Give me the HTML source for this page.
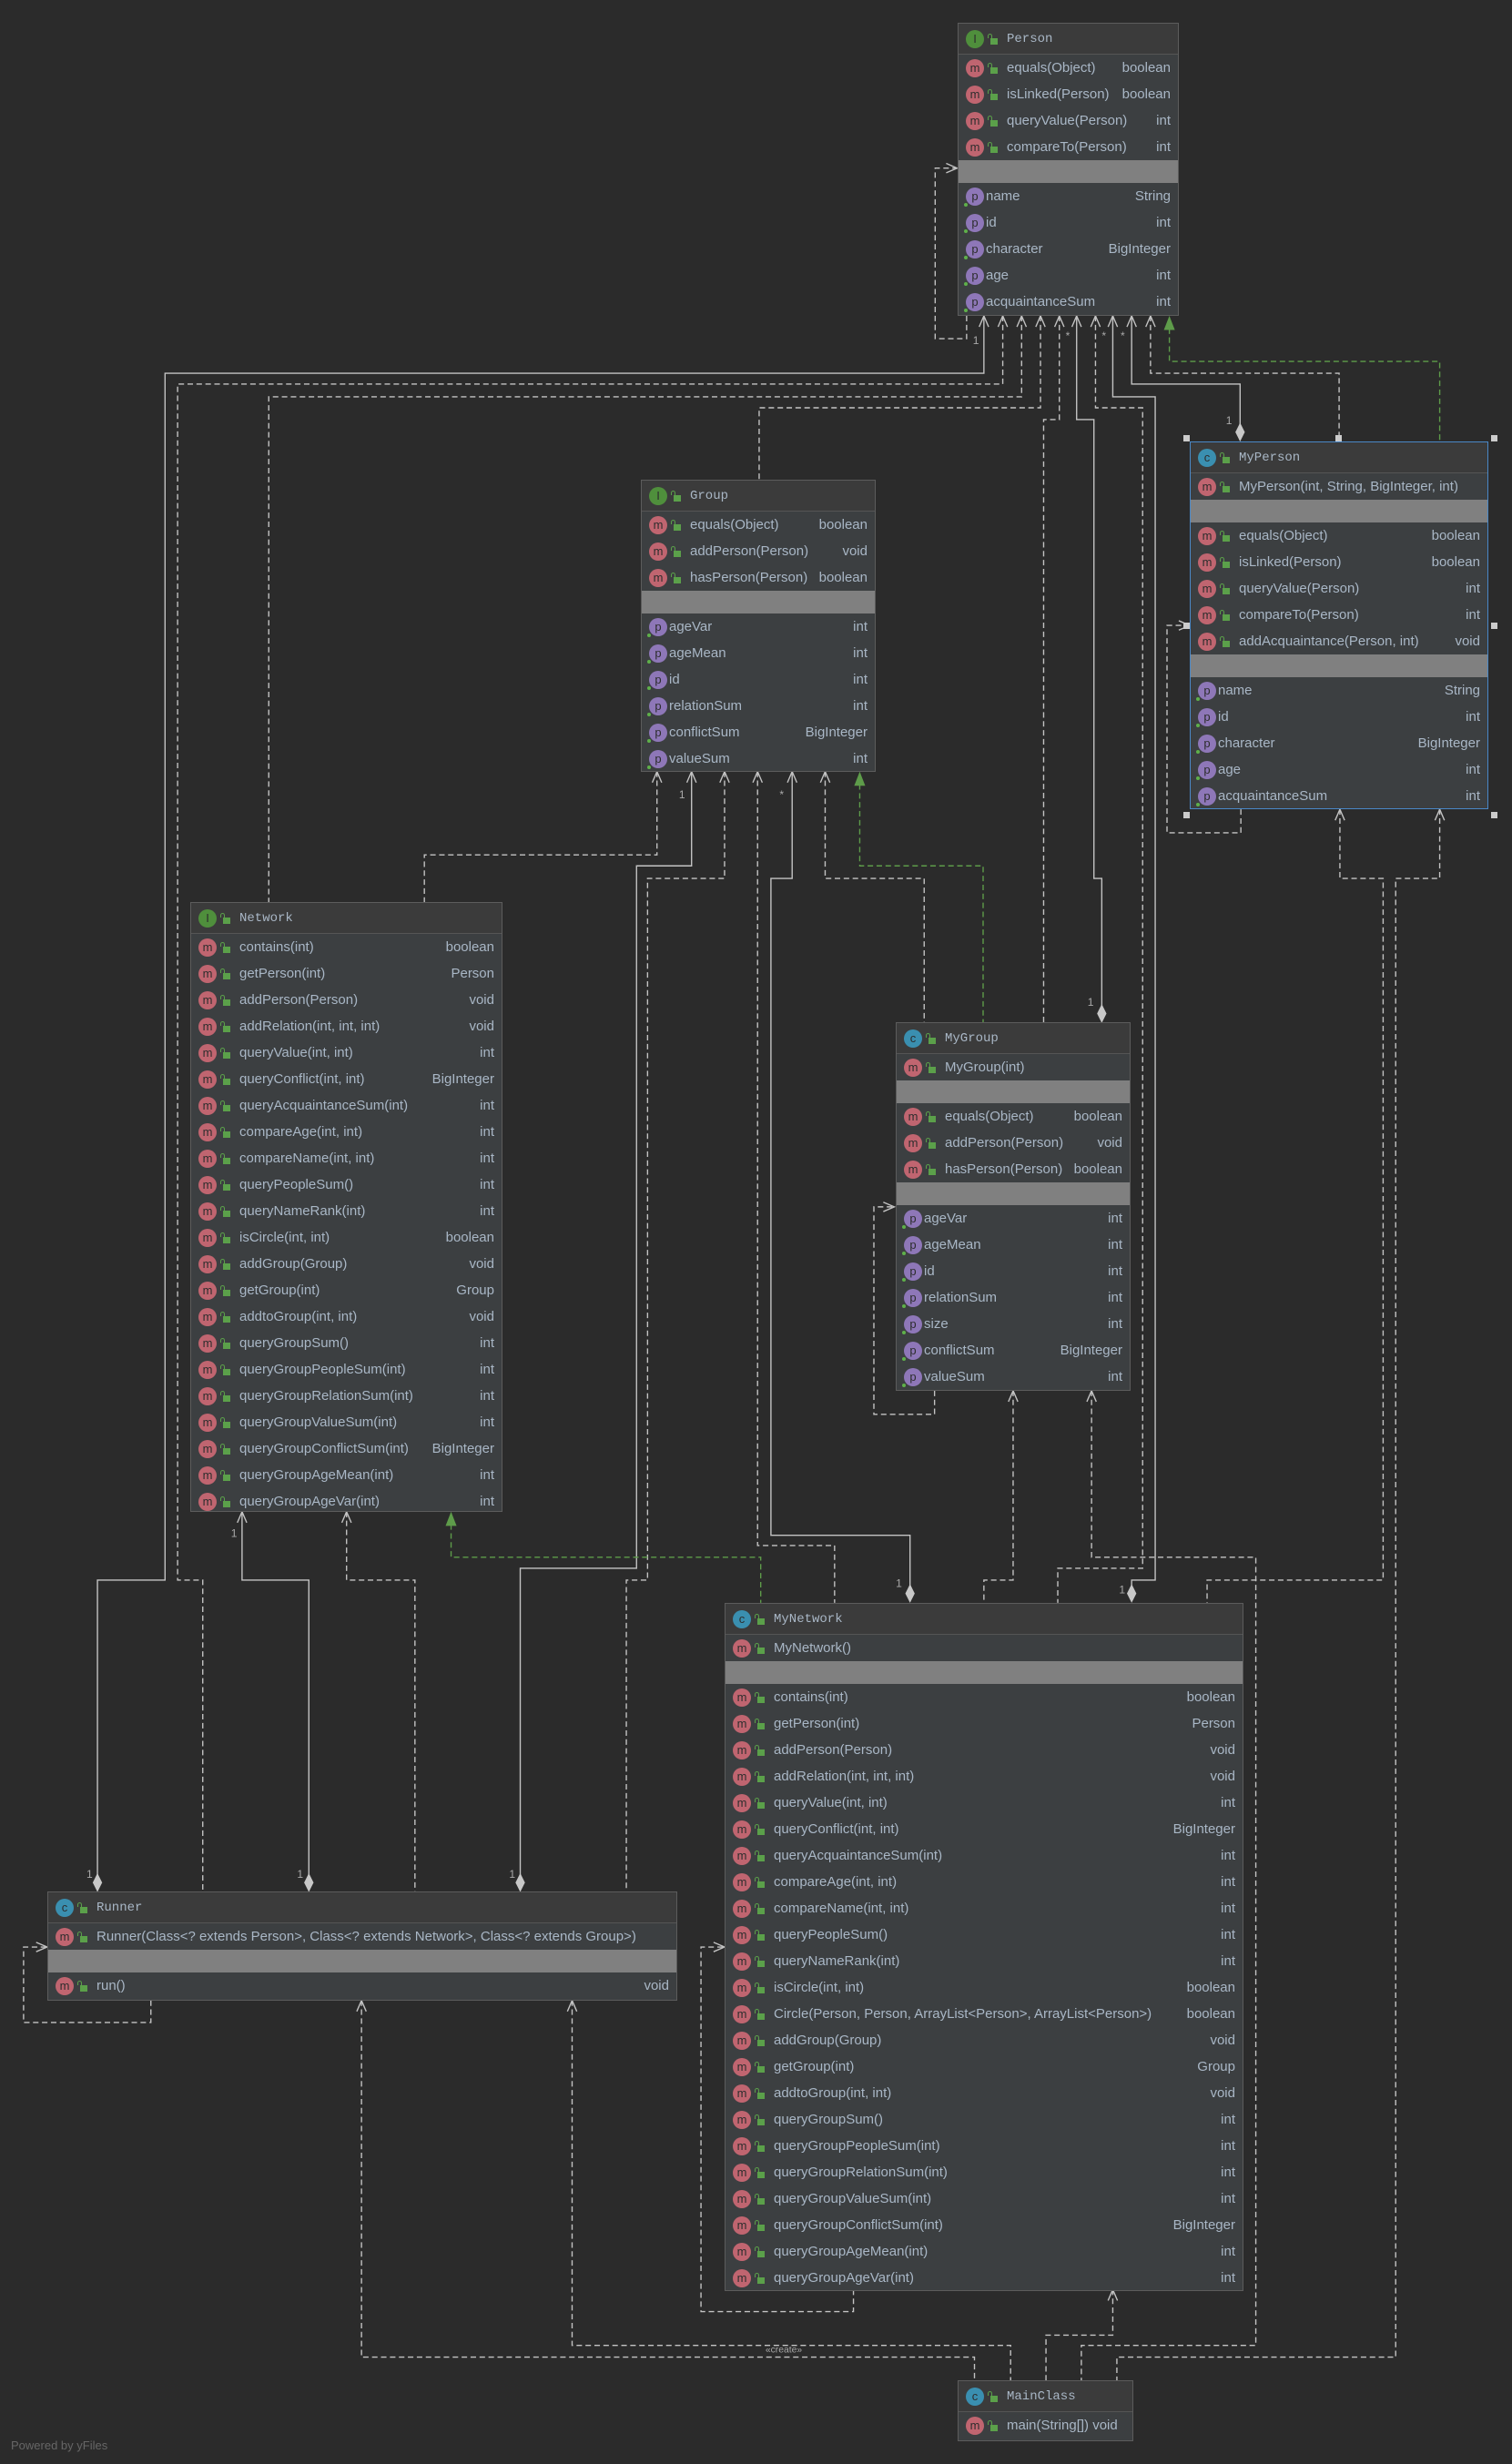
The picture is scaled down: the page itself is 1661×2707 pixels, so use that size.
<!DOCTYPE html>
<html><head><meta charset="utf-8"><style>
*{box-sizing:border-box;margin:0;padding:0}
html,body{width:1661px;height:2707px;background:#2b2b2b;overflow:hidden;position:relative;font-family:"Liberation Sans",sans-serif;color:#a9b7c6}
svg.l{position:absolute;left:0;top:0;width:1661px;height:2707px}
.box{position:absolute;background:#3c3f41;border:1px solid #5c5c5c}
.box.sel{border-color:#4a88c7}
.hd{height:34px;background:#3b3b3b;border-bottom:1px solid #555;display:flex;align-items:center;padding-left:8px;font-family:"Liberation Mono",monospace;font-size:14px}
.r{height:29px;display:flex;align-items:center;padding:0 8px;font-size:15px;white-space:nowrap}
.r .n{flex:1;padding-right:6px}
.sep{height:25px;background:#808080}
.ic{width:20px;height:20px;border-radius:50%;display:inline-flex;align-items:center;justify-content:center;font-size:13px;color:#2d2d2d;font-family:"Liberation Sans",sans-serif;flex:none;margin-right:4px;position:relative}
.m{background:#c06570}.p{background:#8e77b8;margin-right:2px}.i{background:#4f8f3c}.c{background:#3a8fb0}
.p::after{content:"";position:absolute;left:-2px;bottom:-1px;width:4px;height:4px;border-radius:50%;background:#5fb04a}
.lk{width:8px;height:7px;background:#5ba04a;display:inline-block;position:relative;margin:6px 10px 0 3px;flex:none}
.lk::before{content:"";position:absolute;left:-3px;top:-5px;width:3px;height:4px;border:1.5px solid #5ba04a;border-bottom:none;border-radius:3px 3px 0 0}
.hd .lk{margin-right:10px}
.hd .t{color:#a9b7c6}
.h{position:absolute;width:7px;height:7px;background:#ccc}
</style></head><body>

<svg class="l" viewBox="0 0 962 1568" preserveAspectRatio="none">
<g fill="none" stroke="#c4c4c4" stroke-width="0.8">
<path d="M626 201V237.5H105V1005.5H62V1198"/>
<path d="M685 201V267H696V559H701V645"/>
<path d="M708 201V252.5H735V1005.5H720V1014"/>
<path d="M720 201V244.4H789V275"/>
<path d="M440 491V551H405V998H331V1198"/>
<path d="M504 491V559H490.5V977H579V1014"/>
<path d="M154 962V1005.5H196.5V1198"/>
</g>
<g fill="none" stroke="#c4c4c4" stroke-width="0.8" stroke-dasharray="3.5,2.2">
<path d="M638 201V244.4H113V1005.5H129V1204"/>
<path d="M650 201V252.5H171V574"/>
<path d="M662 201V259.5H483V305"/>
<path d="M674 201V267H664V651"/>
<path d="M697 201V259.5H727V998H673V1020"/>
<path d="M732 201V237.5H852V281"/>
<path d="M615 201V215.5H595V107H609"/>
<path d="M418 491V544H270V574"/>
<path d="M461 491V559H412V1005.5H398.5V1204"/>
<path d="M482 491V983.5H531V1020"/>
<path d="M525 491V559H588V651"/>
<path d="M220.5 962V1005.5H264V1204"/>
<path d="M594.6 885V900H556V768H569"/>
<path d="M644.6 885V1005.5H626V1020"/>
<path d="M694.5 885V991H799V1492.5H688V1515"/>
<path d="M789.5 515V530H742.5V398H757"/>
<path d="M852.5 515V559H880V1005.5H768V1020"/>
<path d="M916 515V559H888V1500H710.6V1515"/>
<path d="M543 1457V1471H446V1239H461"/>
<path d="M708 1457V1486H665.5V1515"/>
<path d="M96 1273V1287H15V1239H30"/>
<path d="M230 1273V1500H620V1515"/>
<path d="M364 1273V1492.5H643V1515"/>
</g>
<g fill="none" stroke="#5e9c4a" stroke-width="0.8" stroke-dasharray="3.5,2.2">
<path d="M744 209V230H916V281"/>
<path d="M547 499V551H625.5V651"/>
<path d="M287 970V991H484V1020"/>
</g>
<g fill="#5e9c4a">
<polygon points="744,201 740.5,210 747.5,210"/>
<polygon points="547,491 543.5,500 550.5,500"/>
<polygon points="287,962 283.5,971 290.5,971"/>
</g>
<g fill="none" stroke="#c4c4c4" stroke-width="0.8">
<path d="M623 208L626 201L629 208M635 208L638 201L641 208M647 208L650 201L653 208M659 208L662 201L665 208M671 208L674 201L677 208M682 208L685 201L688 208M694 208L697 201L700 208M705 208L708 201L711 208M717 208L720 201L723 208M729 208L732 201L735 208"/>
<path d="M415 498L418 491L421 498M437 498L440 491L443 498M458 498L461 491L464 498M479 498L482 491L485 498M501 498L504 491L507 498M522 498L525 491L528 498"/>
<path d="M151 969L154 962L157 969M217.5 969L220.5 962L223.5 969"/>
<path d="M641.6 892L644.6 885L647.6 892M691.5 892L694.5 885L697.5 892"/>
<path d="M849.5 522L852.5 515L855.5 522M913 522L916 515L919 522"/>
<path d="M705 1464L708 1457L711 1464"/>
<path d="M227 1280L230 1273L233 1280M361 1280L364 1273L367 1280"/>
<path d="M602 104L609 107L602 110M562 765L569 768L562 771M750 395L757 398L750 401M454 1236L461 1239L454 1242M23 1236L30 1239L23 1242"/>
</g>
<g fill="#c8c8c8">
<polygon points="62,1204 59,1198 62,1192 65,1198"/>
<polygon points="196.5,1204 193.5,1198 196.5,1192 199.5,1198"/>
<polygon points="331,1204 328,1198 331,1192 334,1198"/>
<polygon points="701,651 698,645 701,639 704,645"/>
<polygon points="789,281 786,275 789,269 792,275"/>
<polygon points="579,1020 576,1014 579,1008 582,1014"/>
<polygon points="720,1020 717,1014 720,1008 723,1014"/>
</g>
<g fill="#aaa" font-family="Liberation Sans, sans-serif" font-size="7">
<text x="619" y="219">1</text><text x="678" y="216">*</text><text x="701" y="216">*</text><text x="713" y="216">*</text>
<text x="780" y="270">1</text><text x="692" y="640">1</text><text x="432" y="508">1</text><text x="496" y="508">*</text>
<text x="147" y="978">1</text><text x="55" y="1195">1</text><text x="189" y="1195">1</text><text x="324" y="1195">1</text>
<text x="570" y="1010">1</text><text x="712" y="1014">1</text>
<text x="487" y="1497" font-size="6">«create»</text>
</g>
</svg>

<!-- Person -->
<div class="box" style="left:1052px;top:25px;width:243px;height:322px">
<div class="hd"><span class="ic i">I</span><span class="lk"></span><span class="t">Person</span></div>
<div class="r"><span class="ic m">m</span><span class="lk"></span><span class="n">equals(Object)</span>boolean</div>
<div class="r"><span class="ic m">m</span><span class="lk"></span><span class="n">isLinked(Person)</span>boolean</div>
<div class="r"><span class="ic m">m</span><span class="lk"></span><span class="n">queryValue(Person)</span>int</div>
<div class="r"><span class="ic m">m</span><span class="lk"></span><span class="n">compareTo(Person)</span>int</div>
<div class="sep"></div>
<div class="r"><span class="ic p">p</span><span class="n">name</span>String</div>
<div class="r"><span class="ic p">p</span><span class="n">id</span>int</div>
<div class="r"><span class="ic p">p</span><span class="n">character</span>BigInteger</div>
<div class="r"><span class="ic p">p</span><span class="n">age</span>int</div>
<div class="r"><span class="ic p">p</span><span class="n">acquaintanceSum</span>int</div>
</div>

<!-- MyPerson -->
<div class="box sel" style="left:1307px;top:485px;width:328px;height:404px">
<div class="hd"><span class="ic c">c</span><span class="lk"></span><span class="t">MyPerson</span></div>
<div class="r"><span class="ic m">m</span><span class="lk"></span><span class="n">MyPerson(int, String, BigInteger, int)</span></div>
<div class="sep"></div>
<div class="r"><span class="ic m">m</span><span class="lk"></span><span class="n">equals(Object)</span>boolean</div>
<div class="r"><span class="ic m">m</span><span class="lk"></span><span class="n">isLinked(Person)</span>boolean</div>
<div class="r"><span class="ic m">m</span><span class="lk"></span><span class="n">queryValue(Person)</span>int</div>
<div class="r"><span class="ic m">m</span><span class="lk"></span><span class="n">compareTo(Person)</span>int</div>
<div class="r"><span class="ic m">m</span><span class="lk"></span><span class="n">addAcquaintance(Person, int)</span>void</div>
<div class="sep"></div>
<div class="r"><span class="ic p">p</span><span class="n">name</span>String</div>
<div class="r"><span class="ic p">p</span><span class="n">id</span>int</div>
<div class="r"><span class="ic p">p</span><span class="n">character</span>BigInteger</div>
<div class="r"><span class="ic p">p</span><span class="n">age</span>int</div>
<div class="r"><span class="ic p">p</span><span class="n">acquaintanceSum</span>int</div>
</div>
<div class="h" style="left:1300px;top:478px"></div><div class="h" style="left:1467px;top:478px"></div><div class="h" style="left:1638px;top:478px"></div>
<div class="h" style="left:1300px;top:684px"></div><div class="h" style="left:1638px;top:684px"></div>
<div class="h" style="left:1300px;top:892px"></div><div class="h" style="left:1638px;top:892px"></div>

<!-- Group -->
<div class="box" style="left:704px;top:527px;width:258px;height:321px">
<div class="hd"><span class="ic i">I</span><span class="lk"></span><span class="t">Group</span></div>
<div class="r"><span class="ic m">m</span><span class="lk"></span><span class="n">equals(Object)</span>boolean</div>
<div class="r"><span class="ic m">m</span><span class="lk"></span><span class="n">addPerson(Person)</span>void</div>
<div class="r"><span class="ic m">m</span><span class="lk"></span><span class="n">hasPerson(Person)</span>boolean</div>
<div class="sep"></div>
<div class="r"><span class="ic p">p</span><span class="n">ageVar</span>int</div>
<div class="r"><span class="ic p">p</span><span class="n">ageMean</span>int</div>
<div class="r"><span class="ic p">p</span><span class="n">id</span>int</div>
<div class="r"><span class="ic p">p</span><span class="n">relationSum</span>int</div>
<div class="r"><span class="ic p">p</span><span class="n">conflictSum</span>BigInteger</div>
<div class="r"><span class="ic p">p</span><span class="n">valueSum</span>int</div>
</div>

<!-- Network -->
<div class="box" style="left:209px;top:991px;width:343px;height:670px">
<div class="hd"><span class="ic i">I</span><span class="lk"></span><span class="t">Network</span></div>
<div class="r"><span class="ic m">m</span><span class="lk"></span><span class="n">contains(int)</span>boolean</div>
<div class="r"><span class="ic m">m</span><span class="lk"></span><span class="n">getPerson(int)</span>Person</div>
<div class="r"><span class="ic m">m</span><span class="lk"></span><span class="n">addPerson(Person)</span>void</div>
<div class="r"><span class="ic m">m</span><span class="lk"></span><span class="n">addRelation(int, int, int)</span>void</div>
<div class="r"><span class="ic m">m</span><span class="lk"></span><span class="n">queryValue(int, int)</span>int</div>
<div class="r"><span class="ic m">m</span><span class="lk"></span><span class="n">queryConflict(int, int)</span>BigInteger</div>
<div class="r"><span class="ic m">m</span><span class="lk"></span><span class="n">queryAcquaintanceSum(int)</span>int</div>
<div class="r"><span class="ic m">m</span><span class="lk"></span><span class="n">compareAge(int, int)</span>int</div>
<div class="r"><span class="ic m">m</span><span class="lk"></span><span class="n">compareName(int, int)</span>int</div>
<div class="r"><span class="ic m">m</span><span class="lk"></span><span class="n">queryPeopleSum()</span>int</div>
<div class="r"><span class="ic m">m</span><span class="lk"></span><span class="n">queryNameRank(int)</span>int</div>
<div class="r"><span class="ic m">m</span><span class="lk"></span><span class="n">isCircle(int, int)</span>boolean</div>
<div class="r"><span class="ic m">m</span><span class="lk"></span><span class="n">addGroup(Group)</span>void</div>
<div class="r"><span class="ic m">m</span><span class="lk"></span><span class="n">getGroup(int)</span>Group</div>
<div class="r"><span class="ic m">m</span><span class="lk"></span><span class="n">addtoGroup(int, int)</span>void</div>
<div class="r"><span class="ic m">m</span><span class="lk"></span><span class="n">queryGroupSum()</span>int</div>
<div class="r"><span class="ic m">m</span><span class="lk"></span><span class="n">queryGroupPeopleSum(int)</span>int</div>
<div class="r"><span class="ic m">m</span><span class="lk"></span><span class="n">queryGroupRelationSum(int)</span>int</div>
<div class="r"><span class="ic m">m</span><span class="lk"></span><span class="n">queryGroupValueSum(int)</span>int</div>
<div class="r"><span class="ic m">m</span><span class="lk"></span><span class="n">queryGroupConflictSum(int)</span>BigInteger</div>
<div class="r"><span class="ic m">m</span><span class="lk"></span><span class="n">queryGroupAgeMean(int)</span>int</div>
<div class="r"><span class="ic m">m</span><span class="lk"></span><span class="n">queryGroupAgeVar(int)</span>int</div>
</div>

<!-- MyGroup -->
<div class="box" style="left:984px;top:1123px;width:258px;height:405px">
<div class="hd"><span class="ic c">c</span><span class="lk"></span><span class="t">MyGroup</span></div>
<div class="r"><span class="ic m">m</span><span class="lk"></span><span class="n">MyGroup(int)</span></div>
<div class="sep"></div>
<div class="r"><span class="ic m">m</span><span class="lk"></span><span class="n">equals(Object)</span>boolean</div>
<div class="r"><span class="ic m">m</span><span class="lk"></span><span class="n">addPerson(Person)</span>void</div>
<div class="r"><span class="ic m">m</span><span class="lk"></span><span class="n">hasPerson(Person)</span>boolean</div>
<div class="sep"></div>
<div class="r"><span class="ic p">p</span><span class="n">ageVar</span>int</div>
<div class="r"><span class="ic p">p</span><span class="n">ageMean</span>int</div>
<div class="r"><span class="ic p">p</span><span class="n">id</span>int</div>
<div class="r"><span class="ic p">p</span><span class="n">relationSum</span>int</div>
<div class="r"><span class="ic p">p</span><span class="n">size</span>int</div>
<div class="r"><span class="ic p">p</span><span class="n">conflictSum</span>BigInteger</div>
<div class="r"><span class="ic p">p</span><span class="n">valueSum</span>int</div>
</div>

<!-- MyNetwork -->
<div class="box" style="left:796px;top:1761px;width:570px;height:756px">
<div class="hd"><span class="ic c">c</span><span class="lk"></span><span class="t">MyNetwork</span></div>
<div class="r"><span class="ic m">m</span><span class="lk"></span><span class="n">MyNetwork()</span></div>
<div class="sep"></div>
<div class="r"><span class="ic m">m</span><span class="lk"></span><span class="n">contains(int)</span>boolean</div>
<div class="r"><span class="ic m">m</span><span class="lk"></span><span class="n">getPerson(int)</span>Person</div>
<div class="r"><span class="ic m">m</span><span class="lk"></span><span class="n">addPerson(Person)</span>void</div>
<div class="r"><span class="ic m">m</span><span class="lk"></span><span class="n">addRelation(int, int, int)</span>void</div>
<div class="r"><span class="ic m">m</span><span class="lk"></span><span class="n">queryValue(int, int)</span>int</div>
<div class="r"><span class="ic m">m</span><span class="lk"></span><span class="n">queryConflict(int, int)</span>BigInteger</div>
<div class="r"><span class="ic m">m</span><span class="lk"></span><span class="n">queryAcquaintanceSum(int)</span>int</div>
<div class="r"><span class="ic m">m</span><span class="lk"></span><span class="n">compareAge(int, int)</span>int</div>
<div class="r"><span class="ic m">m</span><span class="lk"></span><span class="n">compareName(int, int)</span>int</div>
<div class="r"><span class="ic m">m</span><span class="lk"></span><span class="n">queryPeopleSum()</span>int</div>
<div class="r"><span class="ic m">m</span><span class="lk"></span><span class="n">queryNameRank(int)</span>int</div>
<div class="r"><span class="ic m">m</span><span class="lk"></span><span class="n">isCircle(int, int)</span>boolean</div>
<div class="r"><span class="ic m">m</span><span class="lk"></span><span class="n">Circle(Person, Person, ArrayList&lt;Person&gt;, ArrayList&lt;Person&gt;)</span>boolean</div>
<div class="r"><span class="ic m">m</span><span class="lk"></span><span class="n">addGroup(Group)</span>void</div>
<div class="r"><span class="ic m">m</span><span class="lk"></span><span class="n">getGroup(int)</span>Group</div>
<div class="r"><span class="ic m">m</span><span class="lk"></span><span class="n">addtoGroup(int, int)</span>void</div>
<div class="r"><span class="ic m">m</span><span class="lk"></span><span class="n">queryGroupSum()</span>int</div>
<div class="r"><span class="ic m">m</span><span class="lk"></span><span class="n">queryGroupPeopleSum(int)</span>int</div>
<div class="r"><span class="ic m">m</span><span class="lk"></span><span class="n">queryGroupRelationSum(int)</span>int</div>
<div class="r"><span class="ic m">m</span><span class="lk"></span><span class="n">queryGroupValueSum(int)</span>int</div>
<div class="r"><span class="ic m">m</span><span class="lk"></span><span class="n">queryGroupConflictSum(int)</span>BigInteger</div>
<div class="r"><span class="ic m">m</span><span class="lk"></span><span class="n">queryGroupAgeMean(int)</span>int</div>
<div class="r"><span class="ic m">m</span><span class="lk"></span><span class="n">queryGroupAgeVar(int)</span>int</div>
</div>

<!-- Runner -->
<div class="box" style="left:52px;top:2078px;width:692px;height:120px">
<div class="hd"><span class="ic c">c</span><span class="lk"></span><span class="t">Runner</span></div>
<div class="r"><span class="ic m">m</span><span class="lk"></span><span class="n">Runner(Class&lt;? extends Person&gt;, Class&lt;? extends Network&gt;, Class&lt;? extends Group&gt;)</span></div>
<div class="sep"></div>
<div class="r"><span class="ic m">m</span><span class="lk"></span><span class="n">run()</span>void</div>
</div>

<!-- MainClass -->
<div class="box" style="left:1052px;top:2615px;width:193px;height:67px">
<div class="hd"><span class="ic c">c</span><span class="lk"></span><span class="t">MainClass</span></div>
<div class="r"><span class="ic m">m</span><span class="lk"></span><span class="n">main(String[]) void</span></div>
</div>

<div style="position:absolute;left:12px;top:2679px;font-size:13px;color:#666">Powered by yFiles</div>
</body></html>
